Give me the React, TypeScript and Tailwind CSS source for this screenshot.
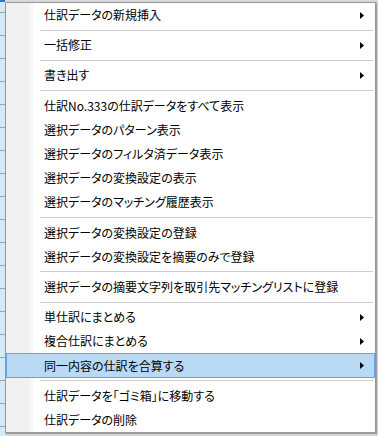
import React from "react";

type Entry =
  | { kind: "item"; label: string; sub?: boolean; active?: boolean }
  | { kind: "sep" };

const entries: Entry[] = [
  { kind: "item", label: "仕訳データの新規挿入", sub: true },
  { kind: "sep" },
  { kind: "item", label: "一括修正", sub: true },
  { kind: "sep" },
  { kind: "item", label: "書き出す", sub: true },
  { kind: "sep" },
  { kind: "item", label: "仕訳No.333の仕訳データをすべて表示" },
  { kind: "item", label: "選択データのパターン表示" },
  { kind: "item", label: "選択データのフィルタ済データ表示" },
  { kind: "item", label: "選択データの変換設定の表示" },
  { kind: "item", label: "選択データのマッチング履歴表示" },
  { kind: "sep" },
  { kind: "item", label: "選択データの変換設定の登録" },
  { kind: "item", label: "選択データの変換設定を摘要のみで登録" },
  { kind: "sep" },
  { kind: "item", label: "選択データの摘要文字列を取引先マッチングリストに登録" },
  { kind: "sep" },
  { kind: "item", label: "単仕訳にまとめる", sub: true },
  { kind: "item", label: "複合仕訳にまとめる", sub: true },
  { kind: "item", label: "同一内容の仕訳を合算する", sub: true, active: true },
  { kind: "sep" },
  { kind: "item", label: "仕訳データを「ゴミ箱」に移動する" },
  { kind: "item", label: "仕訳データの削除" },
];

function Arrow() {
  return (
    <svg width="4" height="7" viewBox="0 0 4 7" className="ml-auto shrink-0">
      <path d="M0 0 L4 3.5 L0 7 Z" fill="#000" />
    </svg>
  );
}

function MenuRow({ label, sub, active }: { label: string; sub?: boolean; active?: boolean }) {
  if (active) {
    return (
      <div className="flex h-[24.2px] shrink-0 items-center border border-[#5fa6e6] bg-[#b9d9f5] pl-[37px] pr-[10px]">
        <span className="whitespace-nowrap">{label}</span>
        {sub && <Arrow />}
      </div>
    );
  }
  return (
    <div className="flex h-[24.2px] shrink-0 items-center pl-[38px] pr-[11px]">
      <span className="whitespace-nowrap">{label}</span>
      {sub && <Arrow />}
    </div>
  );
}

export default function App() {
  const rows = Array.from({ length: 20 });
  return (
    <div
      className="relative h-[436px] w-[378px] overflow-hidden bg-[#d9d9d9]"
      style={{ fontFamily: '"Noto Sans CJK JP", "Noto Sans", sans-serif' }}
    >
      {/* spreadsheet behind the menu */}
      <div className="flex h-full w-[5px] flex-col bg-[#d3ebf7]">
        <div className="h-[2px] shrink-0 bg-[#2a78d0]" />
        <div className="h-[11px] shrink-0 border-b border-[#a0a0a0]" />
        {rows.map((_, i) => (
          <div key={i} className="h-[23px] shrink-0 border-b border-[#a0a0a0]" />
        ))}
      </div>

      {/* context menu */}
      <div className="absolute left-[5px] top-[2px] flex w-[371px] flex-col border border-[#979797] bg-[linear-gradient(to_right,#f1f1f1_0,#f1f1f1_24px,#f8f8f8_24px,#f8f8f8_27px,#ffffff_27px)] text-[12px] leading-none text-black [font-feature-settings:'palt'] shadow-[1px_1px_1px_rgba(0,0,0,0.25)]">
        {entries.map((e, i) =>
          e.kind === "sep" ? (
            <div key={i} className="flex h-[6px] shrink-0 items-center pl-[34px] pr-[2px]">
              <div className="h-px w-full bg-[#cecece]" />
            </div>
          ) : (
            <MenuRow key={i} label={e.label} sub={e.sub} active={e.active} />
          )
        )}
      </div>
    </div>
  );
}
